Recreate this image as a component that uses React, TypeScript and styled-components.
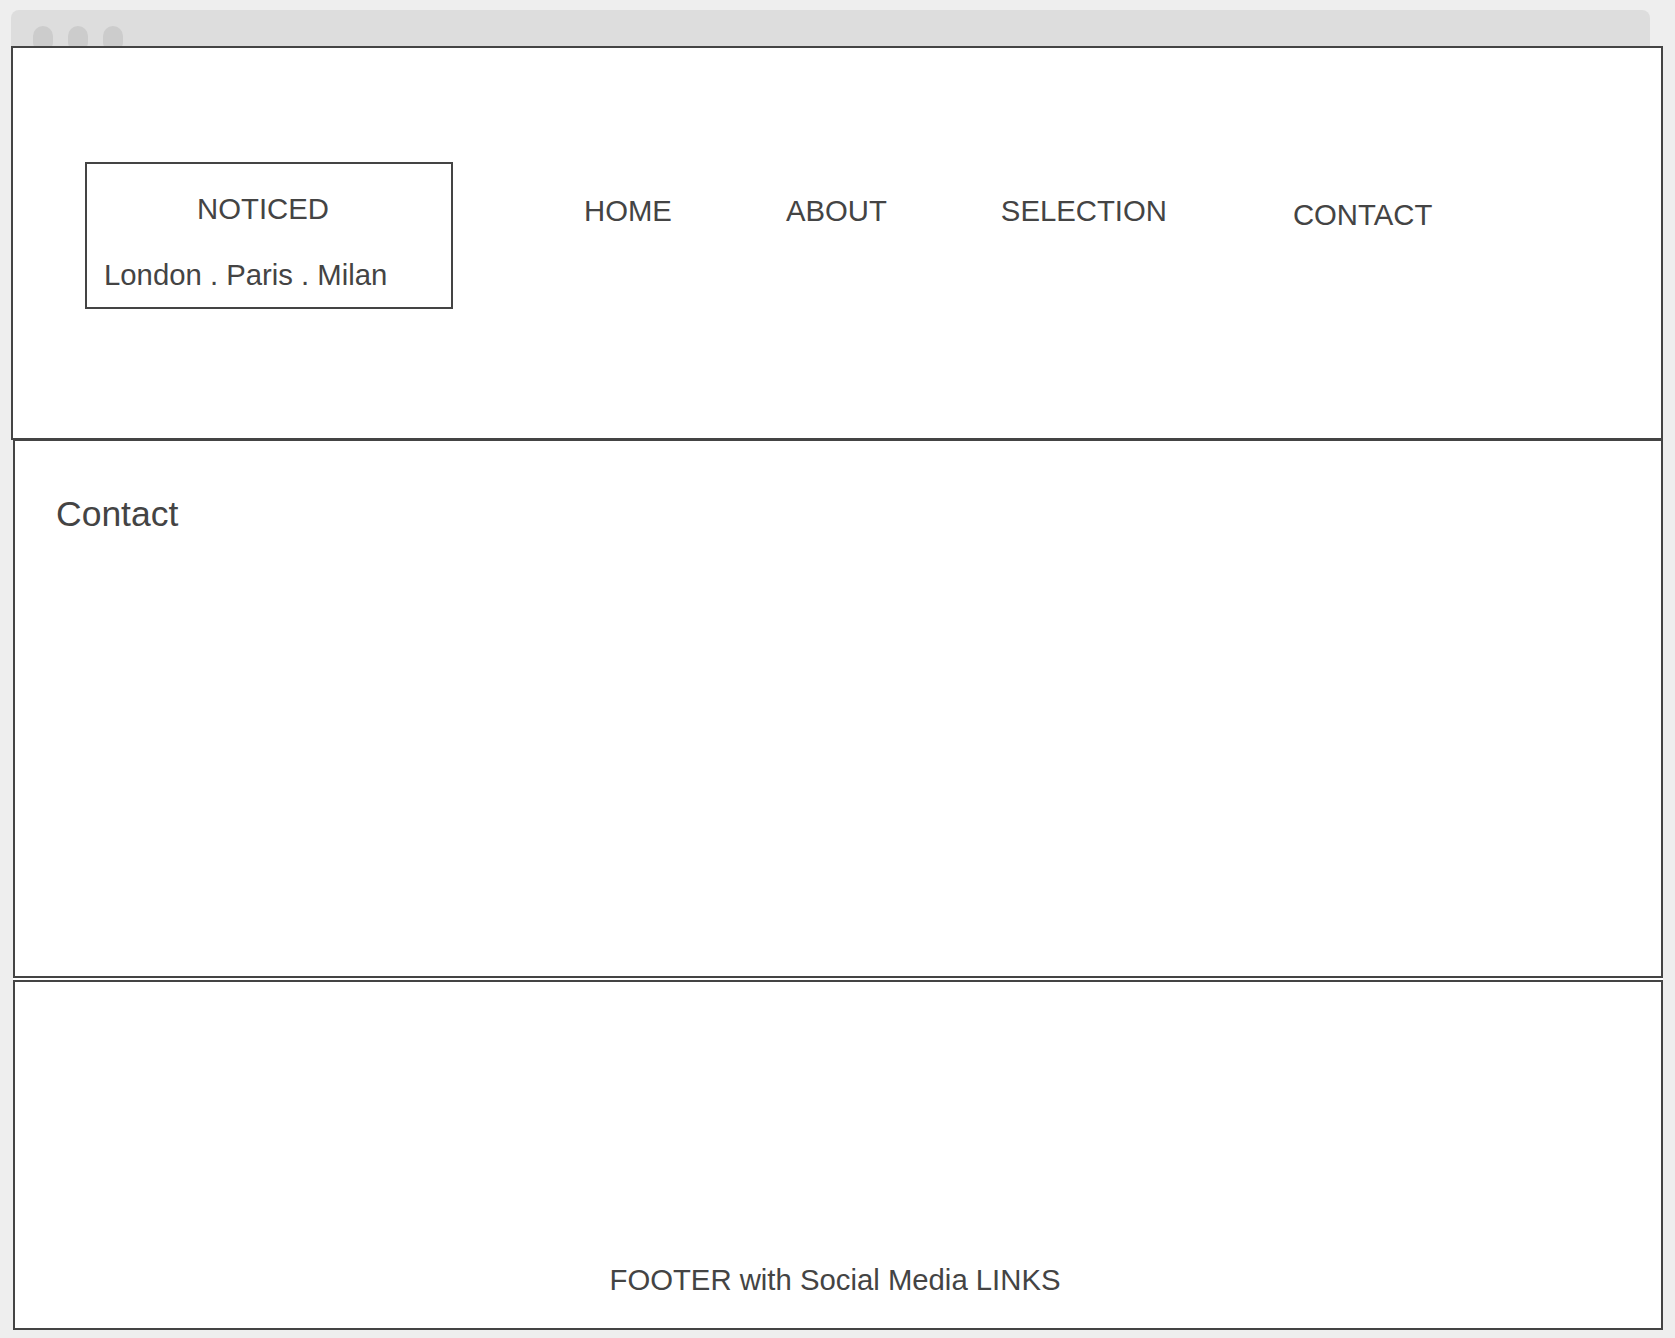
import { createGlobalStyle } from "styled-components";
import styled from "styled-components";

const GlobalStyle = createGlobalStyle`
  html, body {
    margin: 0;
    padding: 0;
    background-color: #eeeeee;
    font-family: "Liberation Sans", Arial, sans-serif;
    color: #444444;
  }
`;

const Page = styled.div`
  display: flex;
  flex-direction: column;
  align-items: flex-start;
  padding: 10px 0 8px 11px;
`;

const TitleBar = styled.div`
  width: 1639px;
  height: 36px;
  background-color: #dddddd;
  border-radius: 8px 8px 0 0;
  display: flex;
  gap: 15px;
  padding: 16px 0 0 22px;
  box-sizing: border-box;
  overflow: hidden;
`;

const Dot = styled.span`
  width: 20px;
  height: 26px;
  border-radius: 10px;
  background-color: #cccccc;
  flex-shrink: 0;
`;

const Header = styled.header`
  width: 1652px;
  height: 394px;
  box-sizing: border-box;
  border: 2px solid #444444;
  background-color: #ffffff;
  display: flex;
  align-items: flex-start;
  padding: 114px 0 0 72px;
`;

const Logo = styled.div`
  width: 368px;
  height: 147px;
  box-sizing: border-box;
  border: 2px solid #444444;
  display: flex;
  flex-direction: column;
  padding: 28px 17px 0 17px;
  gap: 32px;
`;

const Brand = styled.div`
  font-size: 29.3px;
  line-height: 34px;
  text-align: center;
  padding-right: 12px;
`;

const Cities = styled.div`
  font-size: 29.3px;
  line-height: 34px;
`;

const Nav = styled.nav`
  display: flex;
  align-items: flex-start;
  gap: 114px;
  margin: 32px 0 0 131px;
`;

const NavLink = styled.a<{ $shift?: number }>`
  font-size: 29.3px;
  line-height: 34px;
  color: #444444;
  text-decoration: none;
  margin-top: ${(p) => p.$shift ?? 0}px;
  margin-left: ${(p) => (p.$shift ? 12 : 0)}px;
`;

const Body = styled.div`
  display: flex;
  flex-direction: column;
  gap: 2px;
  margin-left: 2px;
  background-color: #ffffff;
`;

const ContactSection = styled.section`
  width: 1650px;
  height: 538px;
  box-sizing: border-box;
  border: 2px solid #444444;
  border-top-width: 1px;
  background-color: #ffffff;
  padding: 52px 0 0 41px;
`;

const Heading = styled.h1`
  margin: 0;
  font-size: 35.5px;
  font-weight: normal;
  line-height: 42px;
`;

const Footer = styled.footer`
  width: 1650px;
  height: 350px;
  box-sizing: border-box;
  border: 2px solid #444444;
  background-color: #ffffff;
  display: flex;
  flex-direction: column;
  justify-content: flex-end;
  align-items: center;
  padding: 0 6px 31px 0;
`;

const FooterText = styled.p`
  margin: 0;
  font-size: 29.3px;
  line-height: 34px;
`;

const links = [
  { label: "HOME" },
  { label: "ABOUT" },
  { label: "SELECTION" },
  { label: "CONTACT", shift: 4 },
];

export default function App() {
  return (
    <>
      <GlobalStyle />
      <Page>
        <TitleBar>
          <Dot />
          <Dot />
          <Dot />
        </TitleBar>
        <Header>
          <Logo>
            <Brand>NOTICED</Brand>
            <Cities>London . Paris . Milan</Cities>
          </Logo>
          <Nav>
            {links.map((link) => (
              <NavLink key={link.label} href="#" $shift={link.shift}>
                {link.label}
              </NavLink>
            ))}
          </Nav>
        </Header>
        <Body>
          <ContactSection>
            <Heading>Contact</Heading>
          </ContactSection>
          <Footer>
            <FooterText>FOOTER with Social Media LINKS</FooterText>
          </Footer>
        </Body>
      </Page>
    </>
  );
}
